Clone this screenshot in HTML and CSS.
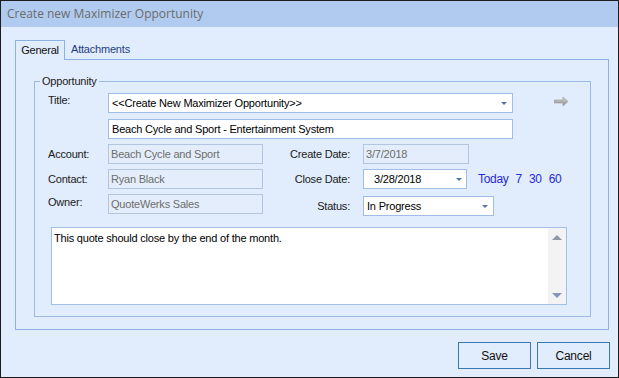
FILE: index.html
```html
<!DOCTYPE html>
<html>
<head>
<meta charset="utf-8">
<link rel="stylesheet" href="styles.css">
</head>
<body>
<div class="window">
  <div class="titlebar">Create new Maximizer Opportunity</div>
  <div class="body">
    <div class="tabs">
      <div class="tab active">General</div>
      <div class="tab">Attachments</div>
    </div>
    <div class="panel">
      <div class="group">
        <span class="legend">Opportunity</span>
        <div class="row row-title">
          <span class="lbl lbl-top">Title:</span>
          <div class="field combo w-title"><span class="val">&lt;&lt;Create New Maximizer Opportunity&gt;&gt;</span><span class="caret"></span></div>
          <svg class="go" width="15" height="9" viewBox="0 0 15 9">
            <defs>
              <linearGradient id="ag" x1="0" y1="0" x2="0" y2="1">
                <stop offset="0" stop-color="#d6d6d6"/>
                <stop offset="1" stop-color="#8c8c8c"/>
              </linearGradient>
            </defs>
            <path d="M0 3 H9 V0 L14 4.5 L9 9 V6 H0 Z" fill="url(#ag)" stroke="#9a9a9a" stroke-width="0.6"/>
          </svg>
        </div>
        <div class="row row-sub">
          <span class="lbl"></span>
          <div class="field w-title"><span class="val">Beach Cycle and Sport - Entertainment System</span></div>
        </div>
        <div class="row">
          <span class="lbl">Account:</span>
          <div class="field disabled w-left"><span class="val">Beach Cycle and Sport</span></div>
          <span class="lbl2">Create Date:</span>
          <div class="field disabled w-create"><span class="val">3/7/2018</span></div>
        </div>
        <div class="row">
          <span class="lbl">Contact:</span>
          <div class="field disabled w-left"><span class="val">Ryan Black</span></div>
          <span class="lbl2">Close Date:</span>
          <div class="field combo w-close"><span class="val date">3/28/2018</span><span class="caret c4"></span></div>
          <div class="links"><span>Today</span><span>7</span><span>30</span><span>60</span></div>
        </div>
        <div class="row row-last">
          <span class="lbl lbl-owner">Owner:</span>
          <div class="field disabled w-left"><span class="val">QuoteWerks Sales</span></div>
          <span class="lbl2 lbl-status">Status:</span>
          <div class="field combo w-status"><span class="val">In Progress</span><span class="caret"></span></div>
        </div>
        <div class="memo">
          <div class="memo-text">This quote should close by the end of the month.</div>
          <div class="scroll">
            <span class="sc-up"></span>
            <span class="sc-down"></span>
          </div>
        </div>
      </div>
    </div>
    <div class="buttons">
      <button class="btn">Save</button>
      <button class="btn">Cancel</button>
    </div>
  </div>
</div>
</body>
</html>
```
FILE: styles.css
```css
* { box-sizing: border-box; }
body {
  margin: 0;
  font-family: "Liberation Sans", Arial, sans-serif;
  font-size: 11px;
  letter-spacing: -0.2px;
  color: #111;
}
.window {
  width: 619px;
  height: 378px;
  border: 1px solid #1c1c1c;
  background: #e1ecfc;
  display: flex;
  flex-direction: column;
}
.titlebar {
  height: 26px;
  flex: none;
  background: #b0cbef;
  color: #6b6b6b;
  font-family: "Open Sans", "Noto Sans", sans-serif;
  font-size: 12px;
  line-height: 26px;
  padding-left: 6px;
  letter-spacing: 0;
}
.body {
  flex: 1;
  padding: 13px 8px 8px 14px;
  display: flex;
  flex-direction: column;
}
.tabs {
  display: flex;
  height: 19px;
  flex: none;
}
.tab {
  height: 20px;
  line-height: 19px;
  padding: 0 6px;
  color: #1f3f7c;
  font-size: 11px;
}
.tab.active {
  width: 50px;
  padding: 0;
  text-align: center;
  color: #111;
  border: 1px solid #8fb0e2;
  border-bottom: none;
  background: #e1ecfc;
  position: relative;
  z-index: 1;
}
.panel {
  width: 594px;
  height: 271px;
  flex: none;
  border: 1px solid #8fb0e2;
  padding: 21px 17px 12px 18px;
}
.group {
  position: relative;
  width: 557px;
  height: 236px;
  border: 1px solid #9bbae6;
  padding: 11px 0 0 13px;
}
.legend {
  position: absolute;
  left: 5px;
  top: -8px;
  padding: 0 2px;
  background: #e1ecfc;
  line-height: 14px;
  color: #222;
}
.row {
  display: flex;
  align-items: center;
  height: 20px;
  margin-bottom: 5px;
}
.row-title { margin-bottom: 6px; }
.row-last { height: 22px; align-items: flex-start; margin-bottom: 11px; }
.lbl {
  width: 60px;
  flex: none;
  color: #1a1a1a;
}
.lbl-top { align-self: flex-start; margin-top: 1px; }
.lbl-owner { margin-top: 2px; }
.lbl2 {
  width: 100px;
  flex: none;
  text-align: right;
  padding-right: 13px;
  color: #1a1a1a;
}
.lbl-status { margin-top: 6px; }
.field {
  height: 20px;
  border: 1px solid #9fbde6;
  background: #fff;
  display: flex;
  align-items: center;
  padding: 0 3px;
  color: #000;
  flex: none;
  white-space: nowrap;
  overflow: hidden;
}
.field .val { flex: 1; }
.field.disabled {
  background: #e3edfb;
  border-color: #b3c6e0;
  color: #6d6d6d;
  padding-left: 2px;
}
.w-title { width: 405px; }
.w-left { width: 155px; }
.w-create { width: 106px; }
.w-close { width: 104px; }
.w-status { width: 131px; margin-top: 2px; }
.date { padding-left: 7px; }
.caret {
  width: 0;
  height: 0;
  border-left: 3px solid transparent;
  border-right: 3px solid transparent;
  border-top: 3px solid #5673ad;
  margin-right: 2px;
  flex: none;
}
.caret.c4 { margin-right: 1px; }
.go { margin-left: 41px; margin-top: -4px; flex: none; }
.links {
  margin-left: 11px;
  display: flex;
  gap: 7px;
  color: #2a2ad8;
  font-size: 12px;
  letter-spacing: -0.3px;
}
.memo {
  margin-left: 3px;
  width: 516px;
  height: 78px;
  border: 1px solid #a3bfe6;
  background: #fff;
  display: flex;
}
.memo-text {
  flex: 1;
  padding: 3px 2px;
  line-height: 14px;
  color: #000;
}
.scroll {
  width: 18px;
  background: #f3f3f3;
  display: flex;
  flex-direction: column;
  justify-content: space-between;
  align-items: center;
  padding: 7px 0 6px;
}
.sc-up {
  width: 0; height: 0;
  border-left: 5px solid transparent;
  border-right: 5px solid transparent;
  border-bottom: 5px solid #8c98a8;
}
.sc-down {
  width: 0; height: 0;
  border-left: 5px solid transparent;
  border-right: 5px solid transparent;
  border-top: 5px solid #8496c0;
}
.buttons {
  display: flex;
  justify-content: flex-end;
  gap: 6px;
  margin-top: 12px;
}
.btn {
  width: 73px;
  height: 27px;
  border: 1px solid #3a78b2;
  background: #e1ecfc;
  font-family: "Liberation Sans", Arial, sans-serif;
  font-size: 12px;
  letter-spacing: -0.2px;
  color: #111;
  padding: 0;
  margin: 0;
}
```
